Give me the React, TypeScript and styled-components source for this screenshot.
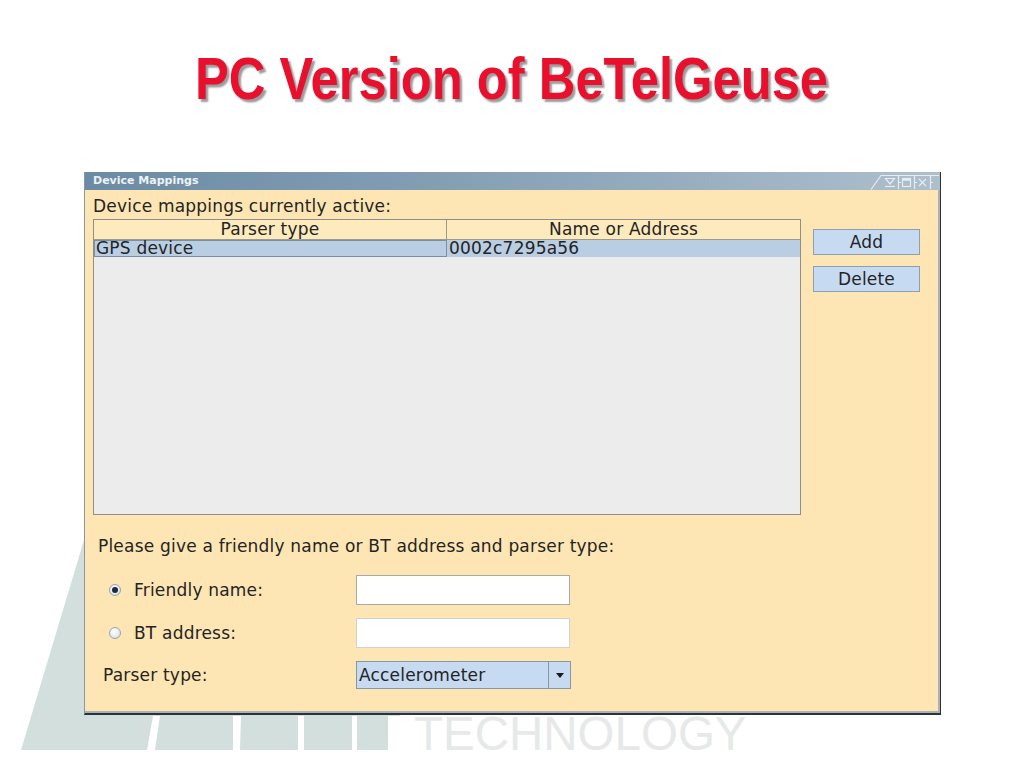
import React from 'react'
import styled, { createGlobalStyle } from 'styled-components'

const UI_FONT = `"DejaVu Sans", "Liberation Sans", sans-serif`

const GlobalStyle = createGlobalStyle`
  html, body {
    margin: 0;
    padding: 0;
    background: #ffffff;
  }
  body {
    font-family: ${UI_FONT};
  }
`

const Slide = styled.div`
  position: relative;
  width: 1024px;
  height: 768px;
  overflow: hidden;
  background: #ffffff;
`

const Backdrop = styled.svg`
  position: absolute;
  left: 0;
  top: 0;
  width: 1024px;
  height: 768px;
  z-index: 0;
`

const Content = styled.div`
  position: relative;
  z-index: 1;
  display: flex;
  flex-direction: column;
`

const Heading = styled.h1`
  margin: 45px 0 0;
  height: 67px;
  text-align: center;
  font: bold 60px/67px "Liberation Sans", Arial, sans-serif;
  color: #e8102c;
  text-shadow: 3px 3px 2px #9c9c9c;

  span {
    display: inline-block;
    transform: scaleX(0.845);
  }
`

const Window = styled.div`
  margin: 60px 0 0 84px;
  width: 857px;
  box-sizing: border-box;
  border-left: 1px solid #8b98a3;
  border-right: 1px solid #2d3237;
  border-bottom: 2px solid #2d3237;
  display: flex;
  flex-direction: column;
`

const TitleBar = styled.div`
  height: 18px;
  display: flex;
  align-items: center;
  justify-content: space-between;
  padding-left: 8px;
  background: linear-gradient(to right, #6b8ba4 0%, #86a0b5 45%, #aebfcc 100%);
  font: bold 11px/18px ${UI_FONT};
  color: #eef2f5;
`

const Body = styled.div`
  background: #fde6b4;
  border-right: 2px solid #a9b2b8;
  border-bottom: 2px solid #a9b2b8;
  padding: 8px 0 22px 8px;
  color: #242424;
  font-size: 17px;
  letter-spacing: 0.2px;
  display: flex;
  flex-direction: column;
`

const TopArea = styled.div`
  display: grid;
  grid-template-columns: 708px 107px;
  grid-template-rows: 17px 296px;
  column-gap: 12px;
  row-gap: 4px;
`

const Caption = styled.div`
  grid-column: 1 / span 2;
  line-height: 17px;
`

const Table = styled.div`
  box-sizing: border-box;
  border: 1px solid #8e8e8e;
  background: #ececec;
  display: flex;
  flex-direction: column;
`

const HeaderRow = styled.div`
  display: grid;
  grid-template-columns: 353px 1fr;
  height: 19px;
  background: #fdeabd;
  border-bottom: 1px solid #a09a8c;
`

const HeaderCell = styled.div<{ $last?: boolean }>`
  text-align: center;
  line-height: 19px;
  border-right: ${(p) => (p.$last ? 'none' : '1px solid #a09a8c')};
`

const DataRow = styled.div<{ $selected?: boolean }>`
  display: grid;
  grid-template-columns: 353px 1fr;
  height: 17px;
  background: ${(p) => (p.$selected ? '#b9cde3' : 'transparent')};
`

const DataCell = styled.div<{ $focused?: boolean }>`
  box-sizing: border-box;
  height: 17px;
  padding-left: ${(p) => (p.$focused ? '1px' : '2px')};
  line-height: ${(p) => (p.$focused ? '15px' : '17px')};
  border: ${(p) => (p.$focused ? '1px solid #7a8ea8' : 'none')};
  white-space: nowrap;
`

const ButtonColumn = styled.div`
  display: flex;
  flex-direction: column;
  gap: 11px;
  padding-top: 10px;
`

const ActionButton = styled.button`
  width: 107px;
  height: 26px;
  box-sizing: border-box;
  padding: 0;
  border: 1px solid #8da0b3;
  background: #c6dbf1;
  color: #242424;
  font: 17px ${UI_FONT};
  letter-spacing: 0.2px;
`

const Prompt = styled.div`
  margin-top: 23px;
  padding-left: 5px;
  line-height: 17px;
`

const Form = styled.div`
  margin-top: 20px;
  display: grid;
  grid-template-columns: 263px 216px;
  grid-template-rows: 30px 30px 28px;
  row-gap: 13px;
`

const FieldLabel = styled.label<{ $indent: number }>`
  display: flex;
  align-items: center;
  gap: 13px;
  padding-left: ${(p) => p.$indent}px;
`

const Radio = styled.span<{ $checked?: boolean }>`
  width: 12px;
  height: 12px;
  box-sizing: border-box;
  border-radius: 50%;
  border: 1px solid #9aa3ad;
  background: radial-gradient(circle at 40% 35%, #ffffff 0%, #e6eaee 60%, #c3cad3 100%);
  display: flex;
  align-items: center;
  justify-content: center;

  &::after {
    content: '';
    width: 6px;
    height: 6px;
    border-radius: 50%;
    background: ${(p) => (p.$checked ? '#1e2842' : 'transparent')};
  }
`

const TextField = styled.input<{ $soft?: boolean }>`
  width: 214px;
  height: 30px;
  box-sizing: border-box;
  margin: 0;
  border: 1px solid ${(p) => (p.$soft ? '#d2d2d0' : '#a9a9a9')};
  background: #ffffff;
  font: 17px ${UI_FONT};
`

const Combo = styled.div`
  width: 215px;
  height: 28px;
  box-sizing: border-box;
  border: 1px solid #8797a6;
  background: #c6dbf1;
  display: flex;
  align-items: stretch;
`

const ComboValue = styled.div`
  flex: 1;
  padding-left: 2px;
  line-height: 26px;
`

const ComboArrow = styled.div`
  width: 21px;
  border-left: 1px solid #8797a6;
  display: flex;
  align-items: center;
  justify-content: center;

  &::after {
    content: '';
    border-left: 4px solid transparent;
    border-right: 4px solid transparent;
    border-top: 5px solid #1a1a1a;
  }
`

const WindowControls = () => (
  <svg width="70" height="18" viewBox="0 0 70 18">
    <g fill="none" stroke="#e6ecf0" strokeWidth="1.2">
      <path d="M1 17.5 L11 3.5 L69 3.5" />
      <path d="M15.5 6.5 L24.5 6.5 L20 12 Z" />
      <path d="M15 14.5 L25 14.5" />
      <path d="M28.5 3.5 V17 M44.5 3.5 V17 M60.5 3.5 V17" />
      <rect x="32.5" y="6.5" width="8" height="8" />
      <path d="M33 7.8 L40 7.8" strokeWidth="2" />
      <path d="M49 7 L56 14 M56 7 L49 14" />
      <path d="M28.5 10.5 H31 M44.5 10.5 H47 M60.5 10.5 H63" />
    </g>
  </svg>
)

export default function App() {
  return (
    <Slide>
      <GlobalStyle />
      <Backdrop viewBox="0 0 1024 768">
        <g fill="#d2dfdc">
          <polygon points="90,520 400,520 400,716 153,716 147,750 21,750" />
          <polygon points="160,716 233,716 233,750 155,750" />
          <polygon points="241,716 298,716 298,750 240,750" />
          <polygon points="304,716 352,716 352,750 304,750" />
          <polygon points="357,716 388,716 388,750 357,750" />
        </g>
        <text
          x="414"
          y="750"
          fontFamily='"Liberation Sans", Arial, sans-serif'
          fontSize="47.5"
          fill="#e7e9e9"
        >
          TECHNOLOGY
        </text>
      </Backdrop>

      <Content>
        <Heading>
          <span>PC Version of BeTelGeuse</span>
        </Heading>

        <Window>
          <TitleBar>
            <span>Device Mappings</span>
            <WindowControls />
          </TitleBar>

          <Body>
            <TopArea>
              <Caption>Device mappings currently active:</Caption>
              <Table>
                <HeaderRow>
                  <HeaderCell>Parser type</HeaderCell>
                  <HeaderCell $last>Name or Address</HeaderCell>
                </HeaderRow>
                <DataRow $selected>
                  <DataCell $focused>GPS device</DataCell>
                  <DataCell>0002c7295a56</DataCell>
                </DataRow>
              </Table>
              <ButtonColumn>
                <ActionButton>Add</ActionButton>
                <ActionButton>Delete</ActionButton>
              </ButtonColumn>
            </TopArea>

            <Prompt>Please give a friendly name or BT address and parser type:</Prompt>

            <Form>
              <FieldLabel $indent={16}>
                <Radio $checked />
                Friendly name:
              </FieldLabel>
              <TextField />

              <FieldLabel $indent={16}>
                <Radio />
                BT address:
              </FieldLabel>
              <TextField $soft />

              <FieldLabel $indent={10}>Parser type:</FieldLabel>
              <Combo>
                <ComboValue>Accelerometer</ComboValue>
                <ComboArrow />
              </Combo>
            </Form>
          </Body>
        </Window>
      </Content>
    </Slide>
  )
}
